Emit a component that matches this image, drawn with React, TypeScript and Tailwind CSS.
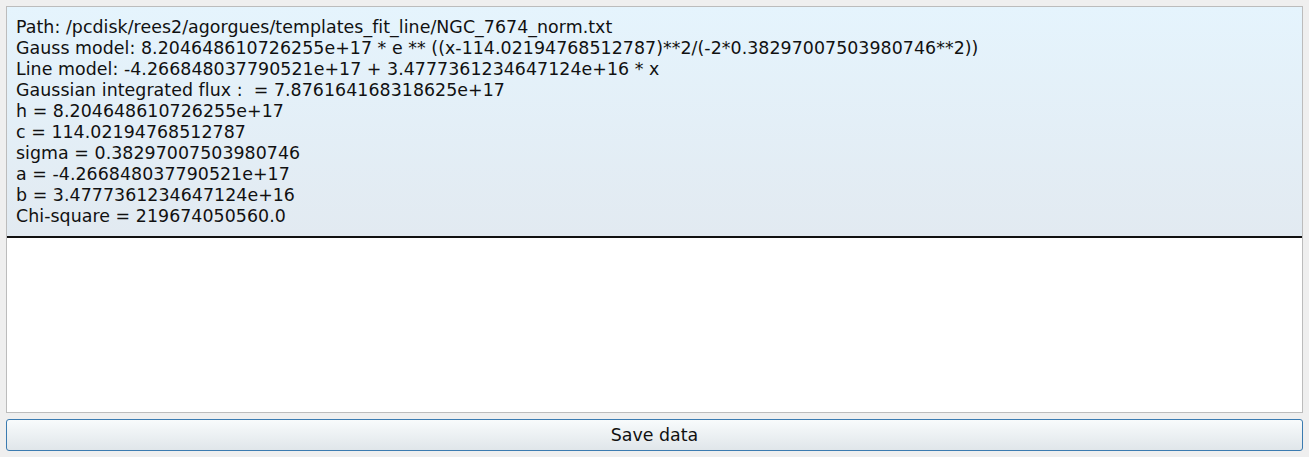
const lines = [
  "Path: /pcdisk/rees2/agorgues/templates_fit_line/NGC_7674_norm.txt",
  "Gauss model: 8.204648610726255e+17 * e ** ((x-114.02194768512787)**2/(-2*0.38297007503980746**2))",
  "Line model: -4.266848037790521e+17 + 3.4777361234647124e+16 * x",
  "Gaussian integrated flux :  = 7.876164168318625e+17",
  "h = 8.204648610726255e+17",
  "c = 114.02194768512787",
  "sigma = 0.38297007503980746",
  "a = -4.266848037790521e+17",
  "b = 3.4777361234647124e+16",
  "Chi-square = 219674050560.0",
];

export default function App() {
  return (
    <div
      className="w-[1309px] h-[457px] bg-[#efefef] px-[6px] pt-[6px] flex flex-col text-[#111]"
      style={{ fontFamily: "'DejaVu Sans', sans-serif" }}
    >
      <div className="h-[407px] border border-[#bcbcbc] bg-white flex flex-col">
        <div className="h-[231px] bg-gradient-to-b from-[#e5f4fd] to-[#e2eaf1] border-b-2 border-[#111] pl-[9px] pt-[10px]">
          {lines.map((line, i) => (
            <div key={i} className="text-[17.4px] leading-[21px] tracking-[0.05px] whitespace-pre">
              {line}
            </div>
          ))}
        </div>
        <div className="flex-1" />
      </div>
      <button className="mt-[6px] h-[32px] w-full rounded-[3px] border border-[#3b7bb0] bg-gradient-to-b from-[#f8fbfc] to-[#e0e6ea] text-[17.4px] text-[#111]">
        Save data
      </button>
    </div>
  );
}
